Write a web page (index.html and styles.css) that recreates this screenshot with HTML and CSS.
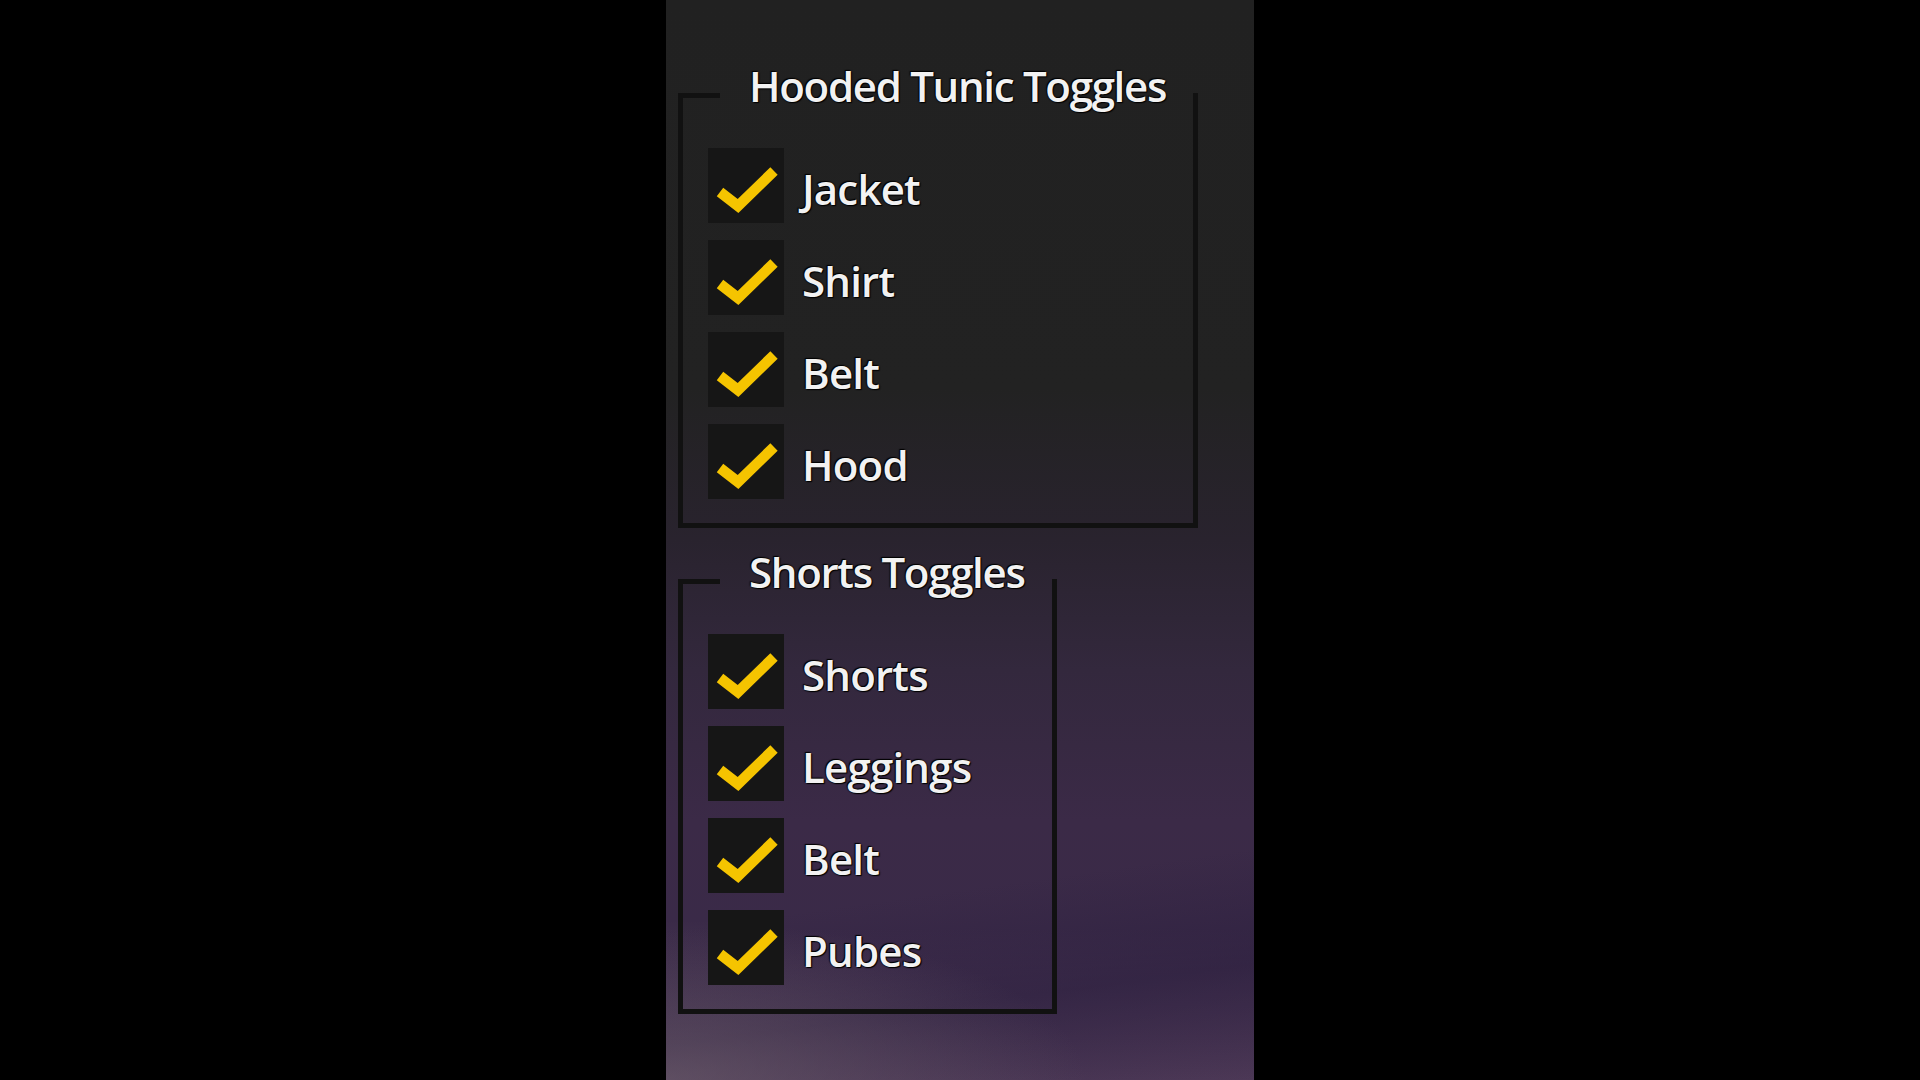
FILE: index.html
```html
<!DOCTYPE html>
<html lang="en">
<head>
  <meta charset="UTF-8">
  <meta name="viewport" content="width=device-width, initial-scale=1.0">
  <title>Outfit Toggles</title>
  <link rel="stylesheet" href="styles.css">
</head>
<body>
  <div class="panel">
    <fieldset class="toggles">
      <legend>Hooded Tunic Toggles</legend>
      <div class="toggle-list">
        <label class="toggle"><span class="box"><svg viewBox="0 0 75 75"><polyline points="12,44 30,58 66,23"/></svg></span><span class="name">Jacket</span></label>
        <label class="toggle"><span class="box"><svg viewBox="0 0 75 75"><polyline points="12,44 30,58 66,23"/></svg></span><span class="name">Shirt</span></label>
        <label class="toggle"><span class="box"><svg viewBox="0 0 75 75"><polyline points="12,44 30,58 66,23"/></svg></span><span class="name">Belt</span></label>
        <label class="toggle"><span class="box"><svg viewBox="0 0 75 75"><polyline points="12,44 30,58 66,23"/></svg></span><span class="name">Hood</span></label>
      </div>
    </fieldset>

    <fieldset class="toggles">
      <legend>Shorts Toggles</legend>
      <div class="toggle-list">
        <label class="toggle"><span class="box"><svg viewBox="0 0 75 75"><polyline points="12,44 30,58 66,23"/></svg></span><span class="name">Shorts</span></label>
        <label class="toggle"><span class="box"><svg viewBox="0 0 75 75"><polyline points="12,44 30,58 66,23"/></svg></span><span class="name">Leggings</span></label>
        <label class="toggle"><span class="box"><svg viewBox="0 0 75 75"><polyline points="12,44 30,58 66,23"/></svg></span><span class="name">Belt</span></label>
        <label class="toggle"><span class="box"><svg viewBox="0 0 75 75"><polyline points="12,44 30,58 66,23"/></svg></span><span class="name">Pubes</span></label>
      </div>
    </fieldset>
  </div>
</body>
</html>
```

FILE: styles.css
```css
html, body {
  margin: 0;
  height: 100%;
  background-color: #000;
}
body {
  font-family: "Open Sans", "Noto Sans", sans-serif;
  color: #f2f2f2;
}
.panel {
  width: 588px;
  height: 1080px;
  margin: 0 auto;
  box-sizing: border-box;
  padding: 64px 0 0 12px;
  overflow: hidden;
  background:
    radial-gradient(ellipse 420px 160px at 0% 100%, rgba(120, 105, 115, 0.55), rgba(120, 105, 115, 0) 100%),
    linear-gradient(172deg, rgba(0, 0, 0, 0) 80%, rgba(40, 28, 60, 0.5) 90%, rgba(0, 0, 0, 0) 100%),
    linear-gradient(to bottom, #212121 0%, #222222 36%, #29232e 50%, #33283d 62%, #3b2a47 76%, #3a2a48 86%, #4c3856 100%);
}
.toggles {
  width: fit-content;
  margin: 0 0 22px 0;
  padding: 22px 0 24px 25px;
  border: 5px solid #111;
}
.toggles legend {
  margin-left: 12px;
  padding: 0 27px 18px 29px;
  font-size: 42px;
  line-height: 44px;
  font-weight: 600;
  letter-spacing: -1.3px;
  white-space: nowrap;
  text-shadow: 0 0 2px #000, 1px 1px 1px #000, -1px -1px 1px #000;
}
.toggle-list {
  display: flex;
  flex-direction: column;
  gap: 17px;
}
.toggle {
  display: flex;
  align-items: center;
  gap: 18px;
  cursor: pointer;
}
.box {
  width: 76px;
  height: 75px;
  background-color: #161616;
  flex-shrink: 0;
}
.box svg {
  display: block;
  width: 75px;
  height: 75px;
  fill: none;
  stroke: #f5c400;
  stroke-width: 10.5;
  stroke-linejoin: miter;
}
.name {
  padding-top: 6px;
  font-size: 42px;
  font-weight: 600;
  letter-spacing: -0.8px;
  white-space: nowrap;
  text-shadow: 0 0 2px #000, 1px 1px 1px #000, -1px -1px 1px #000;
}
```
